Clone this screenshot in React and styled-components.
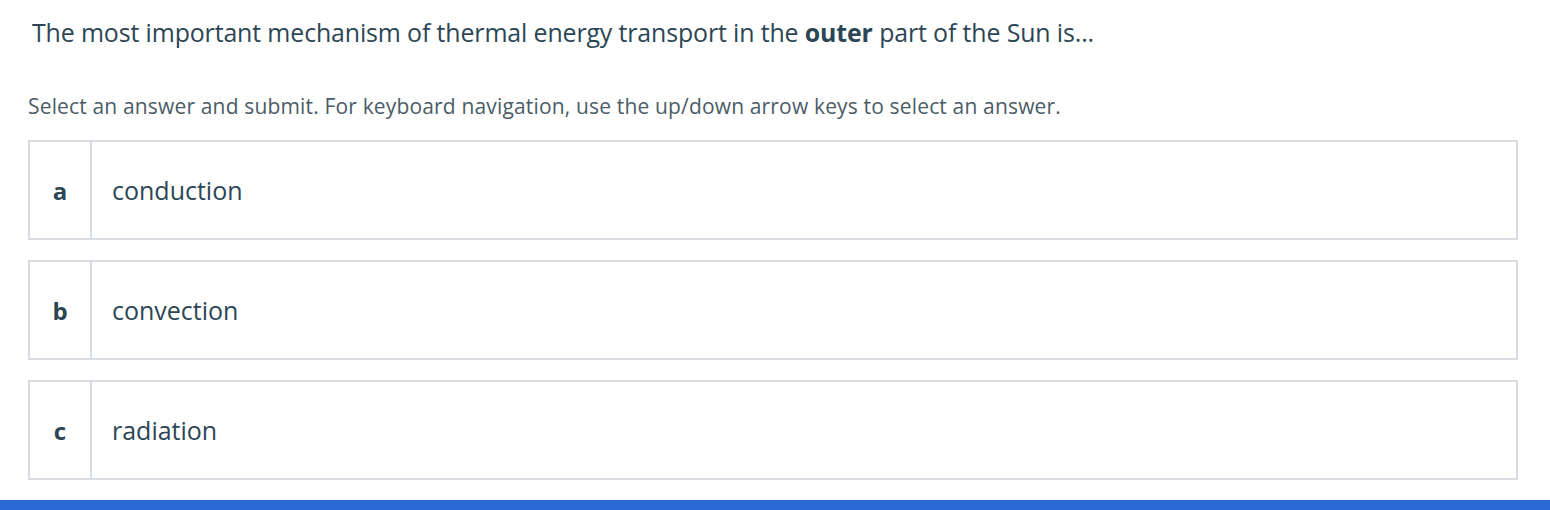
import styled, { createGlobalStyle } from 'styled-components';

const GlobalStyle = createGlobalStyle`
  html, body {
    margin: 0;
    padding: 0;
    background: #ffffff;
  }
  body {
    font-family: 'Open Sans', sans-serif;
    font-variant-ligatures: none;
  }
`;

const options = [
  { key: 'a', label: 'conduction' },
  { key: 'b', label: 'convection' },
  { key: 'c', label: 'radiation' },
];

const App = () => {
  return (
    <>
      <GlobalStyle />
      <Page>
        <Question>
          The most important mechanism of thermal energy transport in the{' '}
          <strong>outer</strong> part of the Sun is...
        </Question>
        <Hint>
          Select an answer and submit. For keyboard navigation, use the
          up/down arrow keys to select an answer.
        </Hint>
        <OptionList>
          {options.map((option) => (
            <Option key={option.key}>
              <Letter>{option.key}</Letter>
              <Label>{option.label}</Label>
            </Option>
          ))}
        </OptionList>
      </Page>
      <BottomBar />
    </>
  );
};

const Page = styled.div`
  padding: 14px 32px 0 28px;
  height: 490px;
  box-sizing: border-box;
`;

const Question = styled.h1`
  margin: 0 0 0 4px;
  font-family: 'Open Sans', sans-serif;
  font-weight: 400;
  font-size: 24.9px;
  line-height: 36px;
  letter-spacing: -0.12px;
  color: #2c4655;

  strong {
    font-weight: 700;
  }
`;

const Hint = styled.p`
  margin: 42px 0 0 0;
  font-family: 'Open Sans', sans-serif;
  font-weight: 400;
  font-size: 21px;
  line-height: 28px;
  letter-spacing: 0.16px;
  color: #4b5c67;
`;

const OptionList = styled.div`
  margin-top: 20px;
  display: flex;
  flex-direction: column;
  gap: 20px;
`;

const Option = styled.div`
  display: flex;
  height: 100px;
  box-sizing: border-box;
  border: 2px solid #d9dde2;
  background: #ffffff;
`;

const Letter = styled.div`
  width: 60px;
  flex-shrink: 0;
  display: flex;
  align-items: center;
  justify-content: center;
  border-right: 2px solid #d9dde2;
  font-family: 'Open Sans', sans-serif;
  font-weight: 700;
  font-size: 24px;
  color: #2c4655;
`;

const Label = styled.div`
  display: flex;
  align-items: center;
  padding-left: 20px;
  font-family: 'Open Sans', sans-serif;
  font-weight: 400;
  font-size: 25px;
  color: #2c4655;
`;

const BottomBar = styled.div`
  height: 10px;
  margin-top: 10px;
  background: #2a6ad4;
`;

export default App;
